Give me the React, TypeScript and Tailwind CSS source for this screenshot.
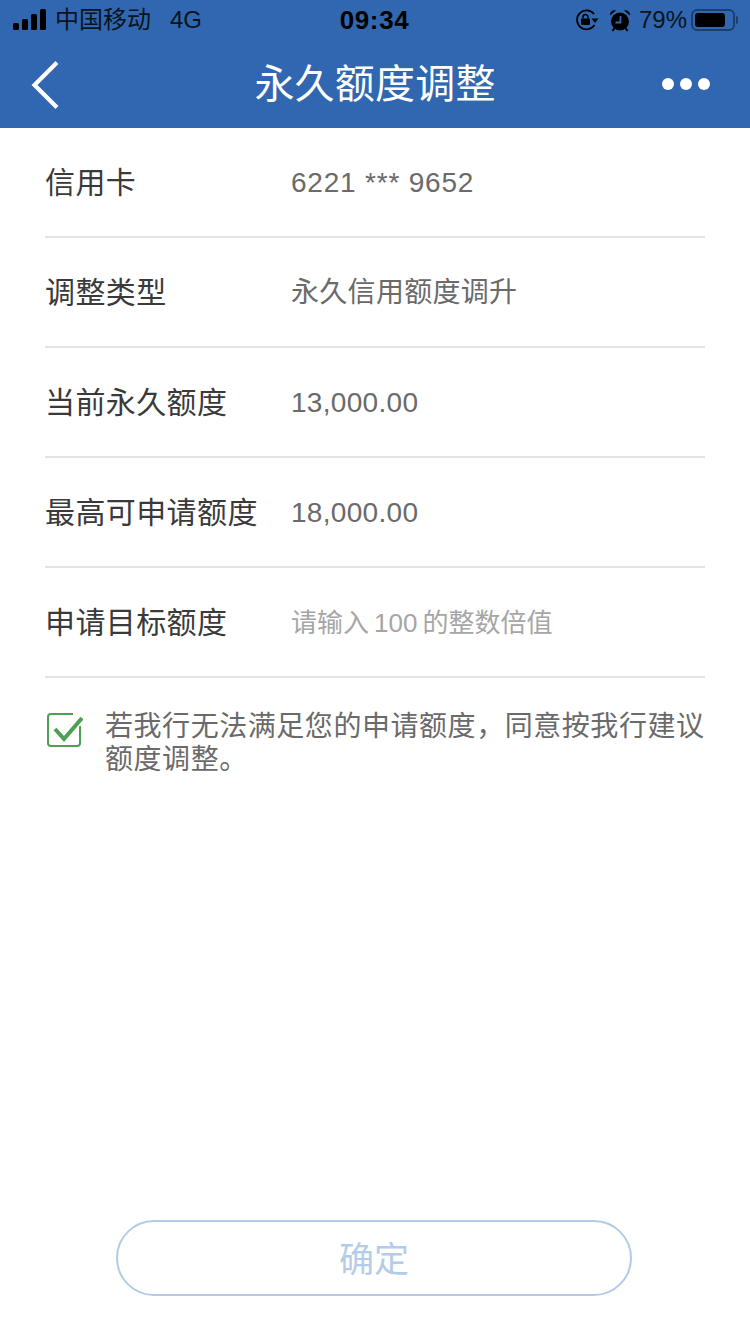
import React from 'react';

const FONT = "font-['Helvetica_Neue','Liberation_Sans','Noto_Sans_CJK_SC',sans-serif]";

const rows = [
  { label: '信用卡', value: '6221 *** 9652', spacing: 'tracking-[0.8px]' },
  { label: '调整类型', value: '永久信用额度调升', spacing: 'tracking-[0.3px]' },
  { label: '当前永久额度', value: '13,000.00', spacing: 'tracking-[0.3px]' },
  { label: '最高可申请额度', value: '18,000.00', spacing: 'tracking-[0.3px]' },
];

const StatusBar = () => (
  <div className="flex h-10 items-center justify-between pl-[13px] pr-[12px] text-[24px] leading-none text-[#0a1420]">
    <div className="flex w-[240px] items-center">
      <svg width="34" height="22" viewBox="0 0 34 22" fill="#000">
        <rect x="0" y="14" width="6" height="7" rx="1.5" />
        <rect x="9" y="10" width="6" height="11" rx="1.5" />
        <rect x="18" y="5" width="6" height="16" rx="1.5" />
        <rect x="27" y="0" width="6" height="21" rx="1.5" />
      </svg>
      <span className="ml-[8px]">中国移动</span>
      <span className="ml-[19px]">4G</span>
    </div>
    <span className="ml-[-2px] text-[26px] font-bold tracking-[0.6px] text-black">09:34</span>
    <div className="flex w-[240px] items-center justify-end">
      <svg width="24" height="24" viewBox="0 0 24 24" fill="none" stroke="#000">
        <path d="M19 6A9.5 9.5 0 1 0 19.5 17" strokeWidth="1.8" />
        <path d="M16.5 10.5h7l-3.5 4.5z" fill="#000" stroke="none" />
        <rect x="6" y="10.5" width="9" height="6.5" rx="1" fill="#000" stroke="none" />
        <path d="M8 10.5V9a2.5 2.5 0 0 1 5 0v1.5" strokeWidth="1.5" />
      </svg>
      <svg className="ml-[10px]" width="22" height="24" viewBox="0 0 22 24" fill="#000">
        <circle cx="11" cy="13.5" r="9" />
        <path d="M1 7.5a4.5 4.5 0 0 1 6-5zM21 7.5a4.5 4.5 0 0 0-6-5z" />
        <path d="M5.5 20l-2 3M16.5 20l2 3" stroke="#000" strokeWidth="2" />
        <path d="M11.5 8v6.5H6.5" stroke="#3067b0" strokeWidth="1.8" fill="none" />
      </svg>
      <span className="ml-[8px]">79%</span>
      <div className="ml-[4px] flex items-center">
        <div className="flex h-[22px] w-[44px] items-center rounded-[6px] border-2 border-[#1d3f6e] p-[2px]">
          <div className="h-full w-[30px] rounded-[3px] bg-black" />
        </div>
        <div className="ml-[1px] h-[8px] w-[2px] rounded-r-sm bg-[#1d3f6e]" />
      </div>
    </div>
  </div>
);

const NavBar = () => (
  <div className="relative flex h-[88px] items-center justify-center">
    <svg className="absolute left-[30px] top-[20px]" width="32" height="50" viewBox="0 0 32 50" fill="none" stroke="#fff">
      <path d="M27 2.5L4.5 25 27 47.5" strokeWidth="4.2" />
    </svg>
    <h1 className="text-[40px] font-normal leading-none tracking-[0.2px] text-white">永久额度调整</h1>
    <div className="absolute right-[40px] top-[38px] flex gap-[6px]">
      <span className="h-[12px] w-[12px] rounded-full bg-white" />
      <span className="h-[12px] w-[12px] rounded-full bg-white" />
      <span className="h-[12px] w-[12px] rounded-full bg-white" />
    </div>
  </div>
);

const Row = ({ label, children }: { label: string; children: React.ReactNode }) => (
  <div className="flex h-[110px] items-center border-b-2 border-[#e4e4e4] pt-[2px]">
    <div className="w-[246px] shrink-0 text-[30px] leading-none tracking-[0.4px] text-[#3a3a3a]">{label}</div>
    {children}
  </div>
);

export default function App() {
  return (
    <div className={`flex h-[1334px] w-[750px] flex-col bg-white ${FONT}`}>
      <header className="h-[128px] bg-[#3067b0]">
        <StatusBar />
        <NavBar />
      </header>

      <main className="flex flex-1 flex-col">
        <div className="mx-[45px]">
          {rows.map(r => (
            <Row key={r.label} label={r.label}>
              <span className={`text-[28px] leading-none text-[#6a6a6a] ${r.spacing}`}>{r.value}</span>
            </Row>
          ))}
          <Row label="申请目标额度">
            <span className="text-[26px] leading-none text-[#a6a6a6]">
              请输入<span className="mx-[5px]">100</span>的整数倍值
            </span>
          </Row>
        </div>

        <div className="mx-[45px] mt-[32px] flex">
          <svg className="ml-[2px] mt-[2px] shrink-0" width="36" height="36" viewBox="0 0 36 36" fill="none" stroke="#4f9f55">
            <path d="M33 14v17a3 3 0 0 1-3 3H4a3 3 0 0 1-3-3V5a3 3 0 0 1 3-3h22" strokeWidth="2" />
            <path d="M8 17l9 10L35 6" strokeWidth="4" />
          </svg>
          <p className="ml-[22px] text-[28px] leading-[33px] tracking-[0.55px] text-[#6a6a6a]">
            若我行无法满足您的申请额度，同意按我行建议额度调整。
          </p>
        </div>

        <button
          type="button"
          className="mx-auto mb-[38px] mt-auto flex h-[76px] w-[516px] translate-x-[-1px] items-center justify-center rounded-full border-2 border-[#b3cbe6] pt-[2px] text-[35px] leading-none text-[#b3cde8]"
        >
          确定
        </button>
      </main>
    </div>
  );
}
